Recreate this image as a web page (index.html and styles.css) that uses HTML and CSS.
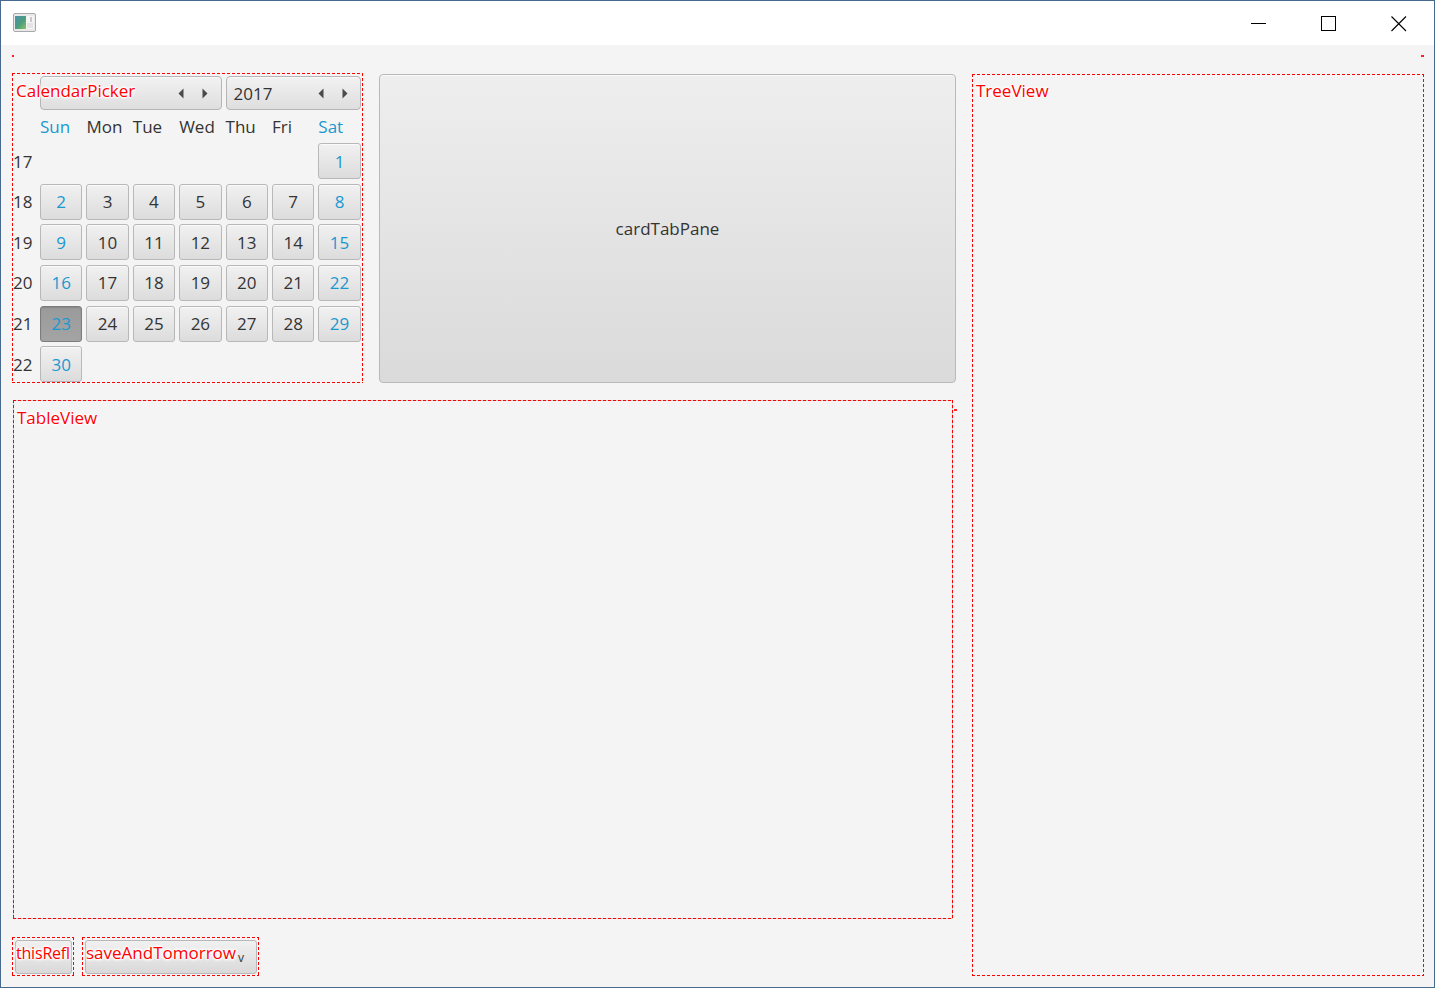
FILE: index.html
```html
<!DOCTYPE html>
<html lang="en">
<head>
<meta charset="utf-8">
<title>CalendarPicker</title>
<link rel="stylesheet" href="styles.css">
</head>
<body>
<div class="window">
  <div class="titlebar">
    <svg class="appicon" width="23" height="19" viewBox="0 0 23 19">
      <defs>
        <linearGradient id="ig" x1="0" y1="0" x2="1" y2="1">
          <stop offset="0" stop-color="#4f8fb0"/>
          <stop offset="0.55" stop-color="#4a9f7a"/>
          <stop offset="1" stop-color="#8fc06a"/>
        </linearGradient>
      </defs>
      <rect x="0.5" y="0.5" width="22" height="18" rx="1.5" fill="#e9e9e9" stroke="#a9a9a9"/>
      <rect x="2" y="3" width="11" height="13" fill="url(#ig)"/>
      <rect x="13" y="3" width="8" height="13" fill="#f5f5f5"/>
      <rect x="17" y="4" width="2" height="5" fill="#c9c9c9"/>
      <rect x="14" y="10" width="6" height="5" fill="#e4e4e4"/>
    </svg>
    <div class="controls">
      <div class="ctl">
        <svg width="16" height="16" viewBox="0 0 16 16"><path d="M0 8.5h15" stroke="#000" stroke-width="1"/></svg>
      </div>
      <div class="ctl">
        <svg width="16" height="16" viewBox="0 0 16 16"><rect x="0.5" y="0.5" width="14" height="14" fill="none" stroke="#000" stroke-width="1"/></svg>
      </div>
      <div class="ctl">
        <svg width="16" height="16" viewBox="0 0 16 16"><path d="M0.5 0.5L15 15M15 0.5L0.5 15" stroke="#000" stroke-width="1.1"/></svg>
      </div>
    </div>
  </div>

  <div class="content">
    <div class="strip"></div>
    <div class="main">
      <div class="toprow">
        <div class="calendar dashed">
          <div class="cal-grid">
            <div></div>
            <div class="hbtn month">
              <span class="arrows">
                <svg width="6" height="11" viewBox="0 0 6 11"><path d="M5.5 0.5V10.5L0.5 5.5Z" fill="#4a4a4a"/></svg>
                <svg width="6" height="11" viewBox="0 0 6 11"><path d="M0.5 0.5V10.5L5.5 5.5Z" fill="#4a4a4a"/></svg>
              </span>
            </div>
            <div class="hbtn year">
              <span class="yname">2017</span>
              <span class="arrows">
                <svg width="6" height="11" viewBox="0 0 6 11"><path d="M5.5 0.5V10.5L0.5 5.5Z" fill="#4a4a4a"/></svg>
                <svg width="6" height="11" viewBox="0 0 6 11"><path d="M0.5 0.5V10.5L5.5 5.5Z" fill="#4a4a4a"/></svg>
              </span>
            </div>

            <div></div>
            <div class="dn we">Sun</div>
            <div class="dn">Mon</div>
            <div class="dn">Tue</div>
            <div class="dn">Wed</div>
            <div class="dn">Thu</div>
            <div class="dn">Fri</div>
            <div class="dn we">Sat</div>

            <div class="wk">17</div>
            <div></div><div></div><div></div><div></div><div></div><div></div>
            <div class="day we">1</div>

            <div class="wk">18</div>
            <div class="day we">2</div><div class="day">3</div><div class="day">4</div><div class="day">5</div><div class="day">6</div><div class="day">7</div><div class="day we">8</div>

            <div class="wk">19</div>
            <div class="day we">9</div><div class="day">10</div><div class="day">11</div><div class="day">12</div><div class="day">13</div><div class="day">14</div><div class="day we">15</div>

            <div class="wk">20</div>
            <div class="day we">16</div><div class="day">17</div><div class="day">18</div><div class="day">19</div><div class="day">20</div><div class="day">21</div><div class="day we">22</div>

            <div class="wk">21</div>
            <div class="day we sel">23</div><div class="day">24</div><div class="day">25</div><div class="day">26</div><div class="day">27</div><div class="day">28</div><div class="day we">29</div>

            <div class="wk">22</div>
            <div class="day we">30</div>
          </div>
          <span class="tag cal-tag">CalendarPicker</span>
        </div>
        <div class="card">cardTabPane</div>
      </div>

      <div class="table">
        <span class="tag">TableView</span>
        <span class="mark"></span>
      </div>

      <div class="tree dashed">
        <span class="tag">TreeView</span>
      </div>

      <div class="bottom">
        <div class="bwrap dashed w1">
          <div class="bbtn"></div>
          <span class="tag btag">thisRefl</span>
        </div>
        <div class="bwrap dashed w2">
          <div class="bbtn"><span class="chev">v</span></div>
          <span class="tag btag">saveAndTomorrow</span>
        </div>
      </div>
    </div>
  </div>
</div>
</body>
</html>
```

FILE: styles.css
```css
* { box-sizing: border-box; }

html, body {
  margin: 0;
  padding: 0;
  background: #f4f4f4;
}

body {
  font-family: "Open Sans", "Noto Sans", "Liberation Sans", sans-serif;
  font-size: 17px;
  color: #333;
}

.window {
  width: 1435px;
  height: 988px;
  border: 1px solid #46698d;
  background: #f4f4f4;
  display: flex;
  flex-direction: column;
  overflow: hidden;
}

.titlebar {
  height: 44px;
  flex: none;
  background: #fff;
  display: flex;
  align-items: flex-start;
}

.appicon {
  margin: 12px 0 0 12px;
}

.controls {
  margin-left: auto;
  display: flex;
}

.ctl {
  width: 70px;
  height: 44px;
  display: flex;
  align-items: flex-start;
  justify-content: center;
  padding-top: 15px;
}

.controls .ctl:nth-child(1) svg { margin-top: -1px; }

.content {
  flex: 1;
  padding: 10px 10px 0 11px;
}

.strip {
  height: 2px;
  border-left: 2px solid #ff2020;
  border-right: 3px solid #ff2020;
  margin-bottom: 16px;
}

.main {
  display: grid;
  grid-template-columns: 944px 452px;
  grid-template-rows: 310px 519px 40px;
  column-gap: 16px;
  row-gap: 17px;
}

/* red dashed outline, 3px dash / 2px gap */
.dashed {
  position: relative;
  border: 1px solid transparent;
}

.dashed::after,
.table::before {
  content: "";
  position: absolute;
  inset: -1px;
  pointer-events: none;
  background:
    repeating-linear-gradient(to right, #ff0000 0 3px, transparent 3px 5px) top left / 100% 1px no-repeat,
    repeating-linear-gradient(to right, #ff0000 0 3px, transparent 3px 5px) bottom left / 100% 1px no-repeat,
    repeating-linear-gradient(to bottom, #ff0000 0 3px, transparent 3px 5px) top left / 1px 100% no-repeat,
    repeating-linear-gradient(to bottom, #ff0000 0 3px, transparent 3px 5px) top right / 1px 100% no-repeat;
  z-index: 3;
}

.toprow {
  grid-column: 1;
  grid-row: 1;
  display: flex;
}

/* ---------- calendar ---------- */
.calendar {
  width: 351px;
  height: 310px;
  padding-top: 2px;
}

.cal-grid {
  display: grid;
  grid-template-columns: 23px repeat(7, 42.4px);
  grid-template-rows: 34px 24px repeat(6, 36px);
  column-gap: 4px;
  row-gap: 4.6px;
}

.hbtn {
  border: 1px solid #b5b5b5;
  border-radius: 4px;
  background: linear-gradient(#f2f2f2, #dedede);
  box-shadow: inset 0 1px 0 #fbfbfb;
  display: flex;
  align-items: center;
}

.month { grid-column: 2 / 6; padding-right: 13px; }
.year { grid-column: 6 / 9; padding-left: 7px; padding-right: 12px; }

.yname { color: #333; }

.arrows {
  margin-left: auto;
  display: flex;
  gap: 18px;
}
.arrows svg { display: block; }

.dn {
  display: flex;
  align-items: center;
  color: #333;
}

.we { color: #1a98d0; }

.wk {
  display: flex;
  align-items: center;
  color: #333;
}

.day {
  border: 1px solid #b8b8b8;
  border-radius: 3px;
  background: linear-gradient(#f1f1f1, #dcdcdc);
  box-shadow: inset 0 1px 0 #fafafa;
  display: flex;
  align-items: center;
  justify-content: center;
  color: #333;
}

.day.we { color: #1a98d0; }

.day.sel {
  background: linear-gradient(#9a9a9a, #a4a4a4);
  border-color: #7c7c7c;
  box-shadow: inset 0 1px 1px #888;
}

/* ---------- labels ---------- */
.tag {
  position: absolute;
  z-index: 2;
  color: #ff0000;
  line-height: 20px;
  white-space: nowrap;
  text-shadow:
    0 0 1px #fff, 0 0 2px #fff, 0 0 2px #fff,
    0 0 3px #fff, 0 0 3px #fff, 0 0 4px #fff,
    0 0 4px #fff, 0 0 5px #fff;
}

.cal-tag {
  top: 7px;
  left: 3px;
}

/* ---------- cardTabPane ---------- */
.card {
  flex: 1;
  margin-left: 16px;
  margin-top: 1px;
  height: 309px;
  border: 1px solid #b9b9b9;
  border-radius: 4px;
  background: linear-gradient(#eeeeee, #dadada);
  box-shadow: inset 0 1px 0 #fafafa;
  display: flex;
  align-items: center;
  justify-content: center;
  color: #333;
}

/* ---------- table ---------- */
.table {
  grid-column: 1;
  grid-row: 2;
  position: relative;
  margin-left: 1px;
  width: 940px;
  border: 1px solid #cdcdcd;
}

.table .tag {
  top: 7px;
  left: 3px;
}

.mark {
  position: absolute;
  right: -5px;
  top: 8px;
  width: 3px;
  height: 2px;
  background: #ff2a2a;
}

/* ---------- tree ---------- */
.tree {
  grid-column: 2;
  grid-row: 1 / 4;
  margin-top: 1px;
}

.tree .tag {
  top: 6px;
  left: 3px;
}

/* ---------- bottom buttons ---------- */
.bottom {
  grid-column: 1;
  grid-row: 3;
  display: flex;
  gap: 8px;
  margin-top: 1px;
  height: 39px;
}

.bwrap {
  padding: 2px 1px 1px 2px;
}

.w1 { width: 62px; }
.w2 { width: 177px; }

.bbtn {
  height: 100%;
  border: 1px solid #b8b8b8;
  border-radius: 3px;
  background: linear-gradient(#f1f1f1, #d9d9d9);
  position: relative;
}

.chev {
  position: absolute;
  right: 12px;
  top: 8px;
  font-size: 12px;
  color: #333;
}

.btag {
  top: 5px;
  left: 3px;
}

.w1 .btag {
  font-size: 16px;
  letter-spacing: -0.2px;
}
```
